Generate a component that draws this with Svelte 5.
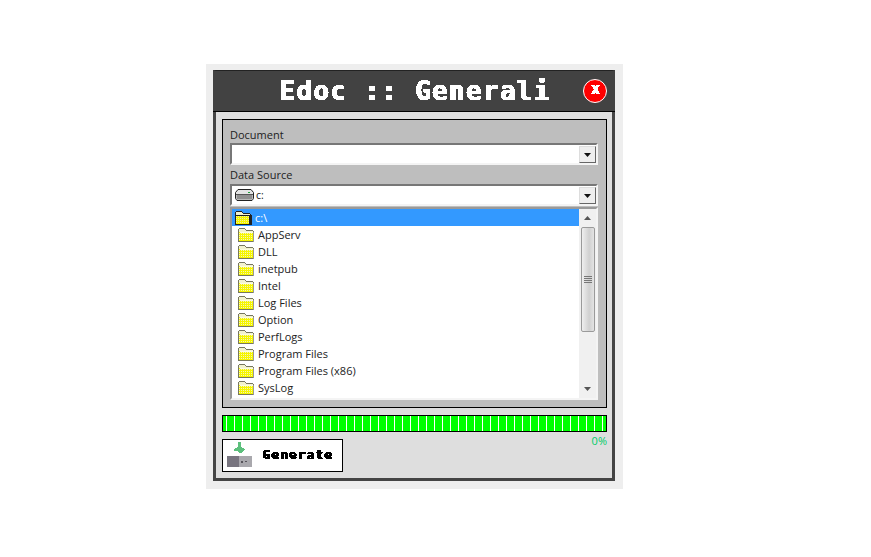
<script lang="ts">
    const folders = [
        "AppServ",
        "DLL",
        "inetpub",
        "Intel",
        "Log Files",
        "Option",
        "PerfLogs",
        "Program Files",
        "Program Files (x86)",
        "SysLog"
    ];
    const segments = Array.from({ length: 48 });

    // sparse dots for the folder body, the old 16 colour look
    let dots = "";
    for (let y = 6; y < 14; y += 2) {
        for (let x = 2; x < 16; x += 2) {
            dots += `M${x} ${y}h1v1h-1z`;
        }
    }
</script>

{#snippet folder(open = false)}
    <svg class="folder" width="18" height="16" viewBox="0 0 18 16" shape-rendering="crispEdges">
        <path d="M2 1h6v1h1v1h7v1h1v11H1V2h1z" fill={open ? "#222" : "#77775f"} />
        <path d="M2 2h6v1h1v1h7v1H2z" fill="#f2f2cf" />
        {#if open}
            <rect x="15" y="5" width="3" height="10" fill="#222" />
            <rect x="2" y="6" width="13" height="8" fill="#f6f600" />
        {:else}
            <rect x="2" y="5" width="14" height="9" fill="#f6f600" />
            <rect x="3" y="5" width="13" height="1" fill="#fbfbe0" />
            <rect x="16" y="5" width="1" height="10" fill="#999" />
        {/if}
        <path d={dots} fill={open ? "#f0f0a0" : "#f4f4b8"} />
        {#if open}
            <rect x="15" y="6" width="1" height="8" fill="#222" />
        {/if}
    </svg>
{/snippet}

{#snippet arrow()}
    <span class="drop">
        <svg width="7" height="4" viewBox="0 0 7 4"><path d="M0 0h7L3.500 4z" fill="#111" /></svg>
    </span>
{/snippet}

<svg class="defs" width="0" height="0">
    <defs>
        <filter id="crisp" x="-5%" y="-5%" width="110%" height="110%">
            <feComponentTransfer>
                <feFuncA type="discrete" tableValues="0 1 1" />
            </feComponentTransfer>
        </filter>
    </defs>
</svg>

<div class="page">
    <div class="frame">
        <div class="window">
            <header class="title">
                <h1>Edoc :: Generali</h1>
                <button class="close"><span>x</span></button>
            </header>
            <div class="content">
                <section class="panel">
                    <div class="label">Document</div>
                    <div class="select">
                        <span class="value"></span>
                        {@render arrow()}
                    </div>
                    <div class="label second">Data Source</div>
                    <div class="select">
                        <span class="value">
                            <svg class="drive" width="19" height="12" viewBox="0 0 19 12">
                                <path d="M3 .5h13l2.500 3v6l-1.500 2H2L.500 9.500v-6z" fill="#e4e4e4" stroke="#222" />
                                <rect x="1.500" y="6" width="16" height="4.500" fill="#8f8f8f" />
                                <path d="M1 5.500h17" stroke="#555" />
                                <rect x="13" y="3" width="2" height="1" fill="#1f9d3a" />
                            </svg>
                            c:
                        </span>
                        {@render arrow()}
                    </div>
                    <div class="list">
                        <div class="rows">
                            <div class="row active">
                                {@render folder(true)}
                                <span>c:\</span>
                            </div>
                            {#each folders as name}
                                <div class="row">
                                    {@render folder()}
                                    <span>{name}</span>
                                </div>
                            {/each}
                        </div>
                        <div class="scrollbar">
                            <svg class="tick" width="7" height="4" viewBox="0 0 7 4"><path d="M0 4h7L3.500 0z" fill="#555" /></svg>
                            <div class="thumb">
                                <i></i><i></i><i></i><i></i>
                            </div>
                            <svg class="tick" width="7" height="4" viewBox="0 0 7 4"><path d="M0 0h7L3.500 4z" fill="#555" /></svg>
                        </div>
                    </div>
                </section>
                <div class="progress">
                    {#each segments as _}
                        <span></span>
                    {/each}
                </div>
                <div class="percent">0%</div>
                <button class="generate">
                    <svg width="25" height="25" viewBox="0 0 25 25" shape-rendering="crispEdges">
                        <path d="M11 0h3v5h1v1h2v1h1v1h-1v1h-1v1h-1v1h-3v-1h-1v-1H8V9H7V7h1V6h2V5h1z" fill="#5cbf7c" />
                        <rect x="0" y="14" width="12" height="11" fill="#78757f" />
                        <rect x="12" y="14" width="13" height="11" fill="#a9a8ad" />
                        <path d="M14 19h2v2h-2zM18 19h2v1h-2z" fill="#55535a" />
                    </svg>
                    <span class="generate-label">Generate</span>
                </button>
            </div>
        </div>
    </div>
</div>

<style>
    :global(body) {
        background: #fff;
    }

    .defs {
        position: absolute;
    }

    .page {
        display: flex;
        padding: 64px 0 0 206px;
        font-family: "Open Sans", "Noto Sans", sans-serif;
        font-size: 11px;
        color: #111;
    }

    .frame {
        width: 417px;
        height: 425px;
        box-sizing: border-box;
        padding: 6px 8px 8px 7px;
        background: #eeeeee;
    }

    .window {
        height: 100%;
        box-sizing: border-box;
        display: flex;
        flex-direction: column;
        border: 3px solid #444;
        border-top: 1px solid #222;
        background: #dedede;
    }

    .title {
        height: 41px;
        flex: none;
        box-sizing: border-box;
        display: flex;
        align-items: center;
        position: relative;
        background: #424242;
        border-bottom: 1px solid #000;
        margin: 0 -3px;
        padding-left: 66px;
    }

    h1 {
        margin: 0;
        font-family: "DejaVu Sans Mono", monospace;
        font-weight: 700;
        font-size: 26px;
        letter-spacing: 1.3px;
        color: #fff;
        white-space: nowrap;
        text-shadow: 1px 0 0 #fff;
        filter: url(#crisp);
    }

    .close {
        position: absolute;
        right: 8px;
        top: 8px;
        width: 24px;
        height: 24px;
        padding: 0 0 3px;
        border: 1px solid #fff;
        border-radius: 50%;
        background: #f00;
        color: #fff;
        font-family: "DejaVu Sans Mono", monospace;
        font-weight: 700;
        font-size: 15px;
        line-height: 1;
    }

    .close span {
        display: block;
        text-shadow: 1px 0 0 #fff;
        filter: url(#crisp);
    }

    .content {
        flex: 1;
        display: flex;
        flex-direction: column;
        align-items: flex-start;
        padding: 7px 6px 0;
    }

    .panel {
        width: 385px;
        height: 289px;
        box-sizing: border-box;
        padding: 7px 8px 0 7px;
        background: #bebebe;
        border: 1px solid #000;
    }

    .label {
        height: 16px;
        line-height: 15px;
        color: #222;
    }

    .second {
        margin-top: 1px;
        height: 18px;
        line-height: 18px;
    }

    .select {
        height: 22px;
        box-sizing: border-box;
        display: flex;
        background: #fff;
        border: 2px solid #f4f4f4;
        border-top-color: #777;
        border-left-color: #777;
    }

    .value {
        flex: 1;
        display: flex;
        align-items: center;
        gap: 2px;
        padding-left: 3px;
        color: #222;
        font-size: 10.5px;
    }

    .drop {
        width: 17px;
        margin-top: 1px;
        display: flex;
        align-items: center;
        justify-content: center;
        box-sizing: border-box;
        background: #eeeeee;
        border: 1px solid #666;
        border-top-color: #ddd;
        border-left-color: #ddd;
    }

    .list {
        height: 193px;
        margin-top: 1px;
        box-sizing: border-box;
        display: flex;
        overflow: hidden;
        background: #fff;
        border: 2px solid #f4f4f4;
        border-top-color: #999;
        border-left-color: #999;
    }

    .rows {
        flex: 1;
        min-width: 0;
    }

    .row {
        height: 17px;
        display: flex;
        align-items: flex-start;
        gap: 3px;
        padding-left: 2px;
        color: #222;
        font-size: 11px;
    }

    .row span {
        align-self: center;
    }

    .row:not(.active) {
        padding-left: 5px;
    }

    .active {
        background: #3399ff;
        color: #fff;
    }

    .folder {
        flex: none;
        margin-top: 1px;
    }

    .scrollbar {
        width: 17px;
        flex: none;
        display: flex;
        flex-direction: column;
        align-items: center;
        background: #f0f0f0;
    }

    .tick {
        flex: none;
        margin: 7px 0;
    }

    .thumb {
        width: 14px;
        height: 105px;
        flex: none;
        box-sizing: border-box;
        display: flex;
        flex-direction: column;
        align-items: center;
        justify-content: center;
        gap: 1px;
        margin-bottom: auto;
        background: linear-gradient(90deg, #efefef, #d0d0d0 60%, #e4e4e4);
        border: 1px solid #9a9a9a;
        border-radius: 2px;
    }

    .thumb i {
        display: block;
        width: 8px;
        height: 1px;
        background: #777;
    }

    .progress {
        width: 385px;
        height: 17px;
        margin-top: 7px;
        box-sizing: border-box;
        display: flex;
        overflow: hidden;
        border: 1px solid #000;
        background: #00ff00;
    }

    .progress span {
        width: 8px;
        flex: none;
        box-sizing: border-box;
        border-right: 1px solid #fff;
    }

    .progress span:first-child {
        width: 4px;
    }

    .percent {
        width: 385px;
        height: 16px;
        line-height: 16px;
        margin-top: 1px;
        text-align: right;
        color: #00cc66;
        font-size: 11px;
    }

    .generate {
        width: 121px;
        height: 33px;
        margin-top: -10px;
        padding: 1px 0 3px 4px;
        box-sizing: border-box;
        display: flex;
        align-items: center;
        gap: 10px;
        background: #fff;
        border: 1px solid #000;
        font-family: "DejaVu Sans Mono", monospace;
        font-weight: 700;
        font-size: 13px;
        letter-spacing: 1px;
        color: #000;
    }

    .generate-label {
        text-shadow: 1px 0 0 #000;
        filter: url(#crisp);
    }
</style>
